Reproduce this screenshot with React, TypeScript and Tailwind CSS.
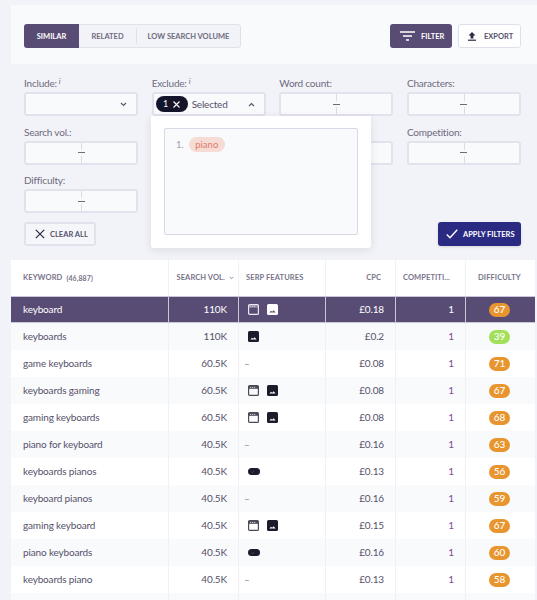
import React from 'react';

const font = { fontFamily: 'Lato, "Open Sans", sans-serif' };

type Feature = 'window' | 'image' | 'pill';

interface Row {
  keyword: string;
  volume: string;
  features: Feature[];
  cpc: string;
  difficulty: number;
}

const rows: Row[] = [
  { keyword: 'keyboard', volume: '110K', features: ['window', 'image'], cpc: '£0.18', difficulty: 67 },
  { keyword: 'keyboards', volume: '110K', features: ['image'], cpc: '£0.2', difficulty: 39 },
  { keyword: 'game keyboards', volume: '60.5K', features: [], cpc: '£0.08', difficulty: 71 },
  { keyword: 'keyboards gaming', volume: '60.5K', features: ['window', 'image'], cpc: '£0.08', difficulty: 67 },
  { keyword: 'gaming keyboards', volume: '60.5K', features: ['window', 'image'], cpc: '£0.08', difficulty: 68 },
  { keyword: 'piano for keyboard', volume: '40.5K', features: [], cpc: '£0.16', difficulty: 63 },
  { keyword: 'keyboards pianos', volume: '40.5K', features: ['pill'], cpc: '£0.13', difficulty: 56 },
  { keyword: 'keyboard pianos', volume: '40.5K', features: [], cpc: '£0.16', difficulty: 59 },
  { keyword: 'gaming keyboard', volume: '40.5K', features: ['window', 'image'], cpc: '£0.15', difficulty: 67 },
  { keyword: 'piano keyboards', volume: '40.5K', features: ['pill'], cpc: '£0.16', difficulty: 60 },
  { keyword: 'keyboards piano', volume: '40.5K', features: [], cpc: '£0.13', difficulty: 58 },
];

const gridCols = 'grid grid-cols-[158px_70px_87px_70px_70px_69px]';

function WindowIcon({ light }: { light?: boolean }) {
  const c = light ? '#e9e8f0' : '#4a4a58';
  const dot = light ? '#e9e8f0' : '#ffffff';
  return (
    <svg width="11" height="11" viewBox="0 0 11 11" fill="none">
      <rect x="0.6" y="0.6" width="9.8" height="9.8" rx="1" stroke={c} strokeWidth="1.2" />
      <rect x="1" y="1" width="9" height="2.8" fill={c} opacity={light ? 0.35 : 1} />
      <path d="M2.2 2.4h1M4.2 2.4h1M6.2 2.4h1" stroke={dot} strokeWidth="0.9" />
    </svg>
  );
}

function ImageIcon({ light }: { light?: boolean }) {
  const bg = light ? '#ffffff' : '#1b1b2b';
  const fg = light ? '#584c74' : '#ffffff';
  return (
    <svg width="11" height="11" viewBox="0 0 11 11">
      <rect width="11" height="11" rx="1.6" fill={bg} />
      <path d="M2.4 8.6 L4 6.8 L5.2 7.7 L6.6 6.2 L8.6 8.6 Z" fill={fg} />
    </svg>
  );
}

function PillIcon() {
  return (
    <svg width="12" height="7" viewBox="0 0 12 7">
      <rect width="12" height="7" rx="3.5" fill="#1b1b2b" />
      <path d="M3.5 3.8l1 .8 1.4-1.6" stroke="#55556a" strokeWidth="0.7" fill="none" />
    </svg>
  );
}

function Label({ children, info }: { children: React.ReactNode; info?: boolean }) {
  return (
    <div className="h-[16px] text-[10px] tracking-[-0.2px] leading-[16px] text-[#6f6b7d] mb-[1px]">
      {children}
      {info && <span className="ml-[2px] italic text-[8px] align-top leading-[12px]">i</span>}
    </div>
  );
}

function RangeInput() {
  return (
    <div className="relative h-[24px] rounded-[3px] border-2 border-[#e1e2ec] bg-[#f9fafc] flex items-center justify-center">
      <div className="absolute top-0 bottom-0 left-1/2 w-px bg-[#dcdce6]" />
      <div className="relative h-[6px] w-[7px] bg-[#f9fafc] flex items-center">
        <div className="h-px w-full bg-[#6f6b7d]" />
      </div>
    </div>
  );
}

function Field({ label }: { label: string }) {
  return (
    <div>
      <Label>{label}</Label>
      <RangeInput />
    </div>
  );
}

function Chevron({ up }: { up?: boolean }) {
  return (
    <svg width="7" height="5" viewBox="0 0 7 5" fill="none">
      <path d={up ? 'M1 4 L3.5 1.5 L6 4' : 'M1 1 L3.5 3.5 L6 1'} stroke="#55516a" strokeWidth="1.1" />
    </svg>
  );
}

export default function App() {
  return (
    <div className="h-[600px] w-[537px] overflow-hidden bg-[#f2f3f8] pt-[5px] pl-[11px] text-[#55516a]" style={font}>
      {/* top toolbar */}
      <div className="h-[59px] bg-[#f9fafc] pl-[13px] pr-[16px] pt-[19px] flex items-start justify-between">
        <div className="flex h-[24px] w-[217px] rounded-[3px] border border-[#dfe0ea] bg-[#f2f3f8] text-[7.5px] font-bold text-[#6f6b7d]">
          <div className="w-[55px] -my-px -ml-px pt-px rounded-l-[3px] bg-[#584c74] text-white flex items-center justify-center">SIMILAR</div>
          <div className="w-[57px] pt-px flex items-center justify-center">RELATED</div>
          <div className="my-[3px] w-px bg-[#dfe0ea]" />
          <div className="flex-1 pt-px flex items-center justify-center">LOW SEARCH VOLUME</div>
        </div>
        <div className="flex gap-[6px]">
          <div className="h-[24px] w-[62px] rounded-[3px] bg-[#584c74] text-white text-[7.5px] font-bold flex items-center pl-[10px] gap-[6px]">
            <svg width="15" height="10" viewBox="0 0 15 10" stroke="#ffffff" strokeWidth="1.4">
              <path d="M0 1h15M3 5h9M6 9h3" />
            </svg>
            <span className="pt-px">FILTER</span>
          </div>
          <div className="h-[24px] w-[63px] rounded-[3px] border border-[#dfe0ea] bg-white text-[#55516a] text-[7.5px] font-bold flex items-center pl-[9px] gap-[8px]">
            <svg width="8" height="9" viewBox="0 0 8 9" fill="#2a2840">
              <path d="M4 0 L7.5 3.6 H5.4 V6.6 H2.6 V3.6 H0.5 Z" />
              <rect y="7.6" width="8" height="1.2" />
            </svg>
            <span className="pt-px">EXPORT</span>
          </div>
        </div>
      </div>

      {/* filters */}
      <div className="relative h-[196px] pl-[13px] pr-[16px] pt-[11px]">
        <div className="grid grid-cols-4 gap-x-[13.6px] gap-y-[7.5px]">
          <div>
            <Label info>Include:</Label>
            <div className="h-[24px] rounded-[3px] border-2 border-[#e1e2ec] bg-[#f9fafc] flex items-center justify-end pr-[9px]">
              <Chevron />
            </div>
          </div>
          <div>
            <Label info>Exclude:</Label>
            <div className="h-[24px] rounded-[3px] border-2 border-[#e1e2ec] bg-[#f9fafc] flex items-center pl-[2px] pr-[9px]">
              <div className="h-[16px] w-[32px] rounded-full bg-[#14142b] text-white text-[9px] flex items-center justify-center gap-[5px]">
                <span>1</span>
                <svg width="7" height="7" viewBox="0 0 7 7" stroke="#ffffff" strokeWidth="1.1">
                  <path d="M0.5 0.5l6 6M6.5 0.5l-6 6" />
                </svg>
              </div>
              <span className="ml-[4px] text-[10px] tracking-[-0.2px] text-[#55516a]">Selected</span>
              <div className="ml-auto flex"><Chevron up /></div>
            </div>
          </div>
          <Field label="Word count:" />
          <Field label="Characters:" />
          <Field label="Search vol.:" />
          <div />
          <Field label="" />
          <Field label="Competition:" />
          <Field label="Difficulty:" />
        </div>

        <div className="mt-[9px] flex justify-between">
          <div className="h-[24px] w-[72px] rounded-[3px] border-2 border-[#e1e2ec] bg-[#f5f6fa] flex items-center pl-[9px] gap-[5px] text-[7.5px] font-bold text-[#55516a]">
            <svg width="10" height="10" viewBox="0 0 10 10" stroke="#2a2840" strokeWidth="1.2">
              <path d="M0.8 0.8l8.4 8.4M9.2 0.8l-8.4 8.4" />
            </svg>
            <span className="pt-px">CLEAR ALL</span>
          </div>
          <div className="h-[24px] w-[83px] rounded-[3px] bg-[#2b2a82] text-white text-[7.5px] font-bold flex items-center pl-[8px] gap-[5px] shadow-sm">
            <svg width="12" height="10" viewBox="0 0 12 10" fill="none" stroke="#ffffff" strokeWidth="1.4">
              <path d="M0.8 5.5l3.2 3.2 7.2-8" />
            </svg>
            <span className="pt-px">APPLY FILTERS</span>
          </div>
        </div>

        {/* exclude dropdown */}
        <div className="absolute left-[140px] top-[52px] z-20 h-[132px] w-[220px] rounded-b-[3px] bg-white shadow-[0_2px_8px_rgba(60,60,100,0.12)] px-[13px] pt-[12px] pb-[13px]">
          <div className="h-[107px] rounded-[2px] border border-[#d8d9e6] bg-[#f9fafc] pl-[11px] pt-[8px] flex items-start gap-[5px] text-[9.5px]">
            <span className="leading-[16px] text-[#a3a1b2]">1.</span>
            <span className="h-[15px] w-[36px] text-center leading-[15px] rounded-full bg-[#f6dcd4] text-[#dd7a6c]">piano</span>
          </div>
        </div>
      </div>

      {/* table */}
      <div className="w-[524px]">
        <div className={`${gridCols} h-[36px] bg-white text-[7.5px] font-bold text-[#77748a] tracking-[0.1px]`}>
          <div className="border-r border-[#f0f1f6] pl-[12px] flex items-center gap-[4px]">
            KEYWORD <span className="text-[7px]">(46,887)</span>
          </div>
          <div className="border-r border-[#f0f1f6] pr-[4px] flex items-center justify-end gap-[4px]">
            SEARCH VOL.
            <svg width="5" height="4" viewBox="0 0 7 5" fill="none"><path d="M1 1 L3.5 3.5 L6 1" stroke="#77748a" strokeWidth="1.2" /></svg>
          </div>
          <div className="border-r border-[#f0f1f6] pl-[7px] flex items-center">SERP FEATURES</div>
          <div className="border-r border-[#f0f1f6] pr-[14px] flex items-center justify-end">CPC</div>
          <div className="border-r border-[#f0f1f6] pl-[7px] flex items-center">COMPETITI...</div>
          <div className="pl-[12px] flex items-center">DIFFICULTY</div>
        </div>

        {rows.map((row, i) => {
          const selected = i === 0;
          const line = selected ? 'border-[#c9c6d8]' : 'border-[#f0f1f6]';
          const bg = selected ? 'bg-[#584c74] text-white' : i % 2 === 1 ? 'bg-[#f9fafc]' : 'bg-white';
          return (
            <div
              key={row.keyword}
              className={`${gridCols} h-[27px] text-[10px] tracking-[-0.15px] ${bg} ${selected ? 'border-y border-[#c9c6d8]' : ''}`}
            >
              <div className={`border-r ${line} pl-[12px] flex items-center`}>{row.keyword}</div>
              <div className={`border-r ${line} pr-[11px] flex items-center justify-end`}>{row.volume}</div>
              <div className={`border-r ${line} pl-[9px] flex items-center gap-[8px]`}>
                {row.features.length === 0 && <span className="-ml-[4px] text-[#8a8799]">–</span>}
                {row.features.map((f) =>
                  f === 'window' ? (
                    <WindowIcon key={f} light={selected} />
                  ) : f === 'image' ? (
                    <ImageIcon key={f} light={selected} />
                  ) : (
                    <PillIcon key={f} />
                  ),
                )}
              </div>
              <div className={`border-r ${line} pr-[11px] flex items-center justify-end`}>{row.cpc}</div>
              <div className={`border-r ${line} pr-[11px] flex items-center justify-end ${selected ? '' : 'text-[#7b4a9b]'}`}>1</div>
              <div className="flex items-center justify-center pr-[2px]">
                <span className={`h-[14px] w-[21px] rounded-full text-white text-[10px] font-medium flex items-center justify-center ${row.difficulty < 50 ? 'bg-[#a3e05a]' : 'bg-[#e8952f]'}`}>
                  {row.difficulty}
                </span>
              </div>
            </div>
          );
        })}
        <div className={`${gridCols} h-[27px] bg-[#f9fafc]`}>
          <div className="border-r border-[#f0f1f6]" />
          <div className="border-r border-[#f0f1f6]" />
          <div className="border-r border-[#f0f1f6]" />
          <div className="border-r border-[#f0f1f6]" />
          <div className="border-r border-[#f0f1f6]" />
          <div />
        </div>
      </div>
    </div>
  );
}
